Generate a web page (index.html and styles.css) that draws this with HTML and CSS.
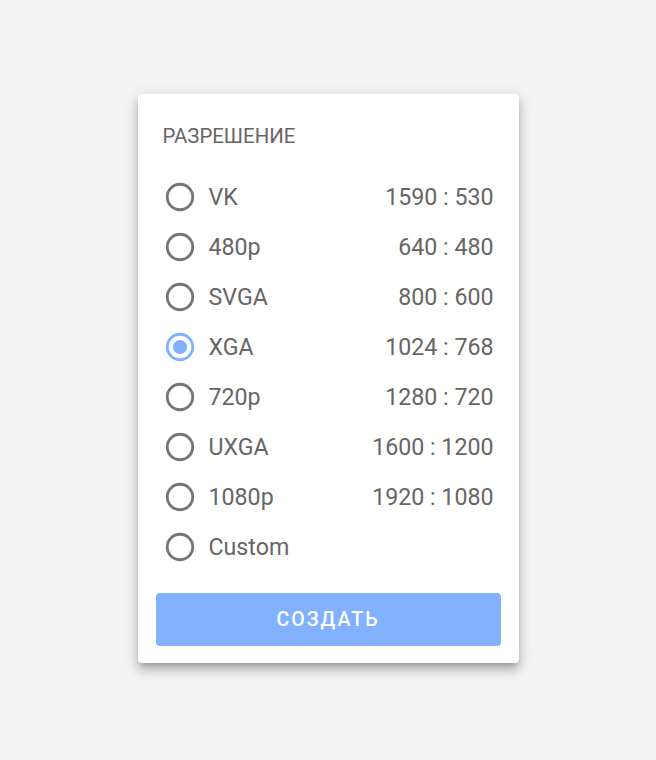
FILE: index.html
```html
<!DOCTYPE html>
<html lang="ru">
<head>
    <meta charset="UTF-8">
    <meta name="viewport" content="width=device-width, initial-scale=1.0">
    <title>Разрешение</title>
    <link rel="stylesheet" href="styles.css">
</head>
<body>
    <div class="card">
        <div class="card-title">Разрешение</div>

        <div class="options">
            <label class="option">
                <svg class="radio" viewBox="0 0 24 24"><path d="M12,20A8,8 0 0,1 4,12A8,8 0 0,1 12,4A8,8 0 0,1 20,12A8,8 0 0,1 12,20M12,2A10,10 0 0,0 2,12A10,10 0 0,0 12,22A10,10 0 0,0 22,12A10,10 0 0,0 12,2Z"/></svg>
                <span class="name">VK</span>
                <span class="size">1590 : 530</span>
            </label>
            <label class="option">
                <svg class="radio" viewBox="0 0 24 24"><path d="M12,20A8,8 0 0,1 4,12A8,8 0 0,1 12,4A8,8 0 0,1 20,12A8,8 0 0,1 12,20M12,2A10,10 0 0,0 2,12A10,10 0 0,0 12,22A10,10 0 0,0 22,12A10,10 0 0,0 12,2Z"/></svg>
                <span class="name">480p</span>
                <span class="size">640 : 480</span>
            </label>
            <label class="option">
                <svg class="radio" viewBox="0 0 24 24"><path d="M12,20A8,8 0 0,1 4,12A8,8 0 0,1 12,4A8,8 0 0,1 20,12A8,8 0 0,1 12,20M12,2A10,10 0 0,0 2,12A10,10 0 0,0 12,22A10,10 0 0,0 22,12A10,10 0 0,0 12,2Z"/></svg>
                <span class="name">SVGA</span>
                <span class="size">800 : 600</span>
            </label>
            <label class="option selected">
                <svg class="radio" viewBox="0 0 24 24"><path d="M12,7A5,5 0 0,0 7,12A5,5 0 0,0 12,17A5,5 0 0,0 17,12A5,5 0 0,0 12,7M12,20A8,8 0 0,1 4,12A8,8 0 0,1 12,4A8,8 0 0,1 20,12A8,8 0 0,1 12,20M12,2A10,10 0 0,0 2,12A10,10 0 0,0 12,22A10,10 0 0,0 22,12A10,10 0 0,0 12,2Z"/></svg>
                <span class="name">XGA</span>
                <span class="size">1024 : 768</span>
            </label>
            <label class="option">
                <svg class="radio" viewBox="0 0 24 24"><path d="M12,20A8,8 0 0,1 4,12A8,8 0 0,1 12,4A8,8 0 0,1 20,12A8,8 0 0,1 12,20M12,2A10,10 0 0,0 2,12A10,10 0 0,0 12,22A10,10 0 0,0 22,12A10,10 0 0,0 12,2Z"/></svg>
                <span class="name">720p</span>
                <span class="size">1280 : 720</span>
            </label>
            <label class="option">
                <svg class="radio" viewBox="0 0 24 24"><path d="M12,20A8,8 0 0,1 4,12A8,8 0 0,1 12,4A8,8 0 0,1 20,12A8,8 0 0,1 12,20M12,2A10,10 0 0,0 2,12A10,10 0 0,0 12,22A10,10 0 0,0 22,12A10,10 0 0,0 12,2Z"/></svg>
                <span class="name">UXGA</span>
                <span class="size">1600 : 1200</span>
            </label>
            <label class="option">
                <svg class="radio" viewBox="0 0 24 24"><path d="M12,20A8,8 0 0,1 4,12A8,8 0 0,1 12,4A8,8 0 0,1 20,12A8,8 0 0,1 12,20M12,2A10,10 0 0,0 2,12A10,10 0 0,0 12,22A10,10 0 0,0 22,12A10,10 0 0,0 12,2Z"/></svg>
                <span class="name">1080p</span>
                <span class="size">1920 : 1080</span>
            </label>
            <label class="option">
                <svg class="radio" viewBox="0 0 24 24"><path d="M12,20A8,8 0 0,1 4,12A8,8 0 0,1 12,4A8,8 0 0,1 20,12A8,8 0 0,1 12,20M12,2A10,10 0 0,0 2,12A10,10 0 0,0 12,22A10,10 0 0,0 22,12A10,10 0 0,0 12,2Z"/></svg>
                <span class="name">Custom</span>
            </label>
        </div>

        <button class="create">Создать</button>
    </div>
</body>
</html>
```

FILE: styles.css
```css
/* Page */
body {
    margin: 0;
    padding: 94px 0 0;
    min-height: 760px;
    box-sizing: border-box;
    background: #f4f4f4;
    font-family: Roboto, "Liberation Sans", sans-serif;
    color: #666;
    display: flex;
    justify-content: center;
    align-items: flex-start;
}

/* Card */
.card {
    width: 381px;
    box-sizing: border-box;
    padding: 18px 18px 17px;
    background: #fff;
    border-radius: 4px;
    box-shadow: 0 5px 5px -3px rgba(0, 0, 0, 0.2), 0 8px 10px 1px rgba(0, 0, 0, 0.14), 0 3px 14px 2px rgba(0, 0, 0, 0.12);
    display: flex;
    flex-direction: column;
}

.card-title {
    height: 48px;
    line-height: 48px;
    padding-left: 7px;
    margin-bottom: 12px;
    font-size: 20.4px;
    text-transform: uppercase;
    color: #666;
}

/* Radio list */
.options {
    display: flex;
    flex-direction: column;
}

.option {
    height: 50px;
    display: flex;
    align-items: center;
    padding: 0 7px 0 7px;
    font-size: 23.2px;
    cursor: pointer;
}

.radio {
    width: 34px;
    height: 34px;
    fill: #757575;
    flex-shrink: 0;
}

.option.selected .radio {
    fill: #82b1ff;
}

.name {
    margin-left: 12px;
    flex: 1;
}

.size {
    text-align: right;
}

/* Button */
.create {
    margin-top: 21px;
    height: 53px;
    border: none;
    border-radius: 4px;
    background: #82b1ff;
    color: #fff;
    font-family: Roboto, "Liberation Sans", sans-serif;
    font-size: 19.6px;
    font-weight: 500;
    letter-spacing: 2px;
    text-transform: uppercase;
    cursor: pointer;
}
```
